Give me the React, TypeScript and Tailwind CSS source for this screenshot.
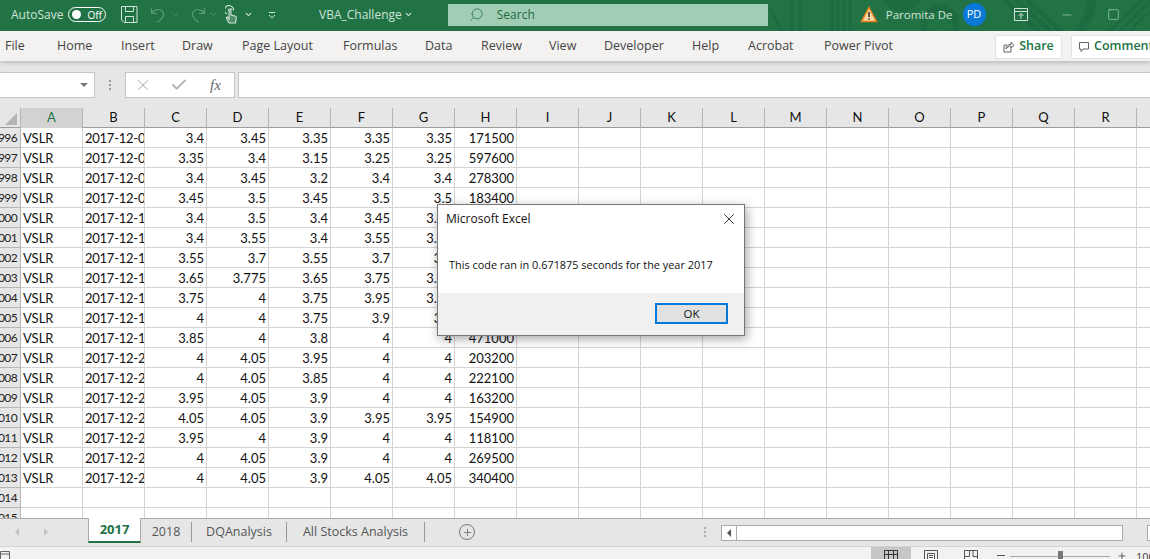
import React from 'react';
import { ChevronDown, X, Check, Search, Minus, Square, Plus } from 'lucide-react';

const tabs = [
  { label: 'File', cls: 'w-[57px] pl-[5px]' },
  { label: 'Home', cls: 'w-[64px]' },
  { label: 'Insert', cls: 'w-[61px]' },
  { label: 'Draw', cls: 'w-[60px]' },
  { label: 'Page Layout', cls: 'w-[101px]' },
  { label: 'Formulas', cls: 'w-[82px]' },
  { label: 'Data', cls: 'w-[56px]' },
  { label: 'Review', cls: 'w-[68px]' },
  { label: 'View', cls: 'w-[55px]' },
  { label: 'Developer', cls: 'w-[88px]' },
  { label: 'Help', cls: 'w-[56px]' },
  { label: 'Acrobat', cls: 'w-[76px]' },
  { label: 'Power Pivot', cls: 'w-[100px]' },
];

const columns = ['A', 'B', 'C', 'D', 'E', 'F', 'G', 'H', 'I', 'J', 'K', 'L', 'M', 'N', 'O', 'P', 'Q', 'R', ''];

const rows: [number, string, string, string, string, string, string, string][] = [
  [3996, '2017-12-0', '3.4', '3.45', '3.35', '3.35', '3.35', '171500'],
  [3997, '2017-12-0', '3.35', '3.4', '3.15', '3.25', '3.25', '597600'],
  [3998, '2017-12-0', '3.4', '3.45', '3.2', '3.4', '3.4', '278300'],
  [3999, '2017-12-0', '3.45', '3.5', '3.45', '3.5', '3.5', '183400'],
  [4000, '2017-12-1', '3.4', '3.5', '3.4', '3.45', '3.45', ''],
  [4001, '2017-12-1', '3.4', '3.55', '3.4', '3.55', '3.55', ''],
  [4002, '2017-12-1', '3.55', '3.7', '3.55', '3.7', '3.7', ''],
  [4003, '2017-12-1', '3.65', '3.775', '3.65', '3.75', '3.75', ''],
  [4004, '2017-12-1', '3.75', '4', '3.75', '3.95', '3.95', ''],
  [4005, '2017-12-1', '4', '4', '3.75', '3.9', '3.9', ''],
  [4006, '2017-12-1', '3.85', '4', '3.8', '4', '4', '471000'],
  [4007, '2017-12-2', '4', '4.05', '3.95', '4', '4', '203200'],
  [4008, '2017-12-2', '4', '4.05', '3.85', '4', '4', '222100'],
  [4009, '2017-12-2', '3.95', '4.05', '3.9', '4', '4', '163200'],
  [4010, '2017-12-2', '4.05', '4.05', '3.9', '3.95', '3.95', '154900'],
  [4011, '2017-12-2', '3.95', '4', '3.9', '4', '4', '118100'],
  [4012, '2017-12-2', '4', '4.05', '3.9', '4', '4', '269500'],
  [4013, '2017-12-2', '4', '4.05', '3.9', '4.05', '4.05', '340400'],
];

const GRID = 'grid grid-cols-[21px_repeat(18,62px)_62px] h-5';
const CELL = 'border-r border-b border-[#d4d4d4] h-5 overflow-hidden whitespace-nowrap leading-[20px] px-[2px]';

function RowHead({ n }: { n: number }) {
  return (
    <div className="flex justify-end overflow-hidden h-5 pr-[3px] bg-[#e6e6e6] border-r border-b border-[#b5b5b5] text-[12px] tracking-[-0.6px] leading-[20px] text-[#222]">
      <span className="shrink-0">{n}</span>
    </div>
  );
}

function Row({ row }: { row: (typeof rows)[number] }) {
  const [n, date, ...nums] = row;
  return (
    <div className={GRID}>
      <RowHead n={n} />
      <div className={CELL}>VSLR</div>
      <div className={`${CELL} tracking-[-0.25px]`}>{date}</div>
      {nums.map((v, i) => (
        <div key={i} className={`${CELL} text-right`}>{v}</div>
      ))}
      {columns.slice(8).map((c) => (
        <div key={c} className={CELL} />
      ))}
    </div>
  );
}

function EmptyRow({ n }: { n: number }) {
  return (
    <div className={GRID}>
      <RowHead n={n} />
      {columns.map((c) => (
        <div key={c} className={CELL} />
      ))}
    </div>
  );
}

export default function App() {
  return (
    <div className="relative w-[1150px] h-[559px] overflow-hidden flex flex-col bg-white font-['Open_Sans',sans-serif]">
      {/* Title bar */}
      <div className="relative h-[31px] shrink-0 bg-[#217346] flex items-center text-[#cfe3d8] overflow-hidden">
        <svg className="absolute left-[770px] top-0" width="380" height="31" viewBox="0 0 380 31" fill="none" stroke="#1e6b41">
          <path strokeWidth="3" d="M22 0v31M30 0v31M62 0v31M68 0v31M74 0v31" />
          <path strokeWidth="3" d="M-5 0L12 31M80 0v31" />
          <path strokeWidth="12" d="M118 -3a16 16 0 0 0 28 0" />
          <circle cx="170" cy="24" r="16" strokeWidth="7" />
          <path strokeWidth="5" d="M235 0l34 31M246 0l34 31M257 0l34 31" />
          <path strokeWidth="9" d="M322 -4c2 14 -6 26 -14 36" />
          <path strokeWidth="3" d="M350 31l30 -30M360 31l20 -20M340 31l40 -40" />
        </svg>
        <div className="relative flex items-center h-full w-full pb-[2px]">
          <span className="ml-[11px] w-[57px] shrink-0 text-[12px]">AutoSave</span>
          <div className="w-[38px] h-[15px] shrink-0 rounded-full border border-white flex items-center px-[3px] justify-between">
            <span className="w-[9px] h-[9px] rounded-full bg-white" />
            <span className="text-[10px] leading-none text-white">Off</span>
          </div>
          <svg className="ml-[15px] shrink-0" width="17" height="17" viewBox="0 0 17 17" fill="none" stroke="#cfe3d8">
            <path d="M.5 .5h15.500v16H3l-2.500-2.500z M4.500 .5v5h8v-5 M4.500 16.500v-6h8v6" />
          </svg>
          <svg className="ml-[12px] shrink-0" width="16" height="17" viewBox="0 0 16 17" fill="none" stroke="#5d9a78" strokeWidth="1.2">
            <path d="M1.500 2v5.500h5.500 M1.500 7.500C4 3 10.500 2 13 6c2 3.500 -1 7 -6 10.500" />
          </svg>
          <ChevronDown className="ml-[5px] shrink-0 text-[#5d9a78]" size={9} />
          <svg className="ml-[10px] shrink-0" width="16" height="17" viewBox="0 0 16 17" fill="none" stroke="#5d9a78" strokeWidth="1.2">
            <path d="M14.500 2v5.500H9 M14.500 7.500C12 3 5.500 2 3 6c-2 3.500 1 7 6 10.500" />
          </svg>
          <ChevronDown className="ml-[3px] shrink-0 text-[#5d9a78]" size={9} />
          <svg className="ml-[7px] shrink-0" width="13" height="19" viewBox="0 0 13 19" fill="none" stroke="#cfe3d8" strokeWidth="1.100">
            <path d="M1.800 9A4.500 4.500 0 1 1 8.500 5.500 M3 5.500a2.200 2.200 0 0 1 4 -.5" />
            <path d="M4 18l-2.500 -4.500c-.6 -1.200 1 -2 1.700 -.8l.8 1.300V6.500c0-1.300 2-1.300 2 0V10l4 1c1 .3 1.500 1 1.300 2l-.8 5z" fill="#cfe3d8" fillOpacity="0.25" />
          </svg>
          <ChevronDown className="ml-[6px] shrink-0" size={9} strokeWidth={3} />
          <svg className="ml-[15px] shrink-0" width="8" height="8" viewBox="0 0 8 8" fill="none" stroke="#cfe3d8">
            <path d="M1 1.500h6M1 4l3 3 3-3" />
          </svg>
          <span className="ml-[43px] shrink-0 text-[12px]">VBA_Challenge</span>
          <ChevronDown className="ml-[2px] shrink-0" size={9} strokeWidth={3} />
          <div className="ml-[35px] w-[320px] h-[22px] shrink-0 bg-[#a0cdb3] flex items-center text-[#1f6b42]">
            <Search className="ml-[21px] -scale-x-100" size={15} strokeWidth={1.2} />
            <span className="ml-[13px] text-[12px]">Search</span>
          </div>
          <svg className="ml-[92px] shrink-0" width="18" height="17" viewBox="0 0 18 17">
            <path d="M9 1.500L16.500 15.500H1.500z" fill="#f7d9a8" stroke="#e8801a" strokeWidth="1.500" />
            <path d="M9 6v5M9 12.200v1.600" stroke="#3a2a10" strokeWidth="1.500" />
          </svg>
          <span className="ml-[8px] shrink-0 text-[11.5px]">Paromita De</span>
          <div className="ml-[10px] w-[23px] h-[23px] shrink-0 rounded-full bg-[#0a78d7] text-white text-[11px] flex items-center justify-center">PD</div>
          <svg className="ml-[28px] shrink-0" width="14" height="13" viewBox="0 0 14 13" fill="none" stroke="#cfe3d8">
            <path d="M.5 .5h13v12H.5z M.5 3.500h13 M7 11V5.500M4.500 8L7 5.500 9.500 8" />
          </svg>
          <Minus className="ml-[32px] shrink-0" size={14} strokeWidth={1} />
          <Square className="ml-[33px] shrink-0" size={13} strokeWidth={1} />
        </div>
      </div>

      {/* Ribbon tabs */}
      <div className="relative z-10 h-[30px] shrink-0 bg-[#f3f2f1] flex items-center pt-[1px] text-[12.5px] text-[#444] shadow-[0_2px_4px_rgba(0,0,0,0.18)]">
        {tabs.map((t) => (
          <span key={t.label} className={`${t.cls} shrink-0 whitespace-nowrap`}>{t.label}</span>
        ))}
        <div className="ml-[71px] flex gap-[9px] shrink-0">
          <div className="w-[67px] h-[24px] shrink-0 bg-white border border-[#e3e3e3] rounded-[2px] flex items-center justify-center gap-[4px] text-[#217346] font-semibold text-[12.5px]">
            <svg width="12" height="13" viewBox="0 0 12 13" fill="none" stroke="#666">
              <path d="M8 7.500v4.500H1V5h3 M3 9c0-3 2-4.500 5-4.500V2l3 3.500L8 8V6C6 6 4 7 3 9z" />
            </svg>
            Share
          </div>
          <div className="w-[100px] h-[24px] shrink-0 bg-white border border-[#e3e3e3] rounded-[2px] flex items-center pl-[6px] gap-[4px] text-[#217346] font-semibold text-[12.5px]">
            <svg width="12" height="12" viewBox="0 0 12 12" fill="none" stroke="#666">
              <path d="M1.500 1.500h9v6.500H5L3 10.500V8H1.500z" />
            </svg>
            Comments
          </div>
        </div>
      </div>

      {/* Formula bar */}
      <div className="h-[47px] shrink-0 bg-[#e6e6e6] flex items-start pt-[11px]">
        <div className="w-[95px] h-[26px] bg-white border border-[#c6c6c6] border-l-0 flex items-center justify-end pr-[6px]">
          <span className="w-0 h-0 border-x-[4px] border-x-transparent border-t-[4px] border-t-[#777]" />
        </div>
        <div className="w-[30px] h-[26px] flex flex-col items-center justify-center gap-[2px]">
          <span className="w-[2px] h-[2px] bg-[#999]" />
          <span className="w-[2px] h-[2px] bg-[#999]" />
          <span className="w-[2px] h-[2px] bg-[#999]" />
        </div>
        <div className="w-[110px] h-[26px] bg-white border border-[#c6c6c6] flex items-center text-[#b5b5b5]">
          <X className="ml-[8px]" size={18} strokeWidth={1.4} />
          <Check className="ml-[18px]" size={18} strokeWidth={2.5} />
          <span className="ml-[22px] text-[#666] text-[15px] italic font-['Liberation_Serif',serif]">fx</span>
        </div>
        <div className="ml-[3px] flex-1 h-[26px] bg-white border border-[#c6c6c6] border-r-0" />
      </div>

      {/* Sheet */}
      <div className="flex-1 min-h-0 overflow-hidden font-['Lato',sans-serif] text-[13px] text-[#111]">
        <div className="grid grid-cols-[21px_repeat(18,62px)_62px] h-5 bg-[#e6e6e6] border-b border-[#9c9c9c]">
          <div className="relative border-r border-[#b5b5b5]">
            <span className="absolute right-[3px] bottom-[3px] w-0 h-0 border-l-[12px] border-l-transparent border-b-[12px] border-b-[#b4b4b4]" />
          </div>
          {columns.map((c) => (
            <div
              key={c}
              className={`border-r border-[#b5b5b5] flex items-center justify-center ${c === 'A' ? 'bg-[#d2d2d2] text-[#217346]' : ''}`}
            >
              {c}
            </div>
          ))}
        </div>
        {rows.map((r) => (
          <Row key={r[0]} row={r} />
        ))}
        <EmptyRow n={4014} />
        <EmptyRow n={4015} />
      </div>

      {/* Sheet tabs */}
      <div className="h-[28px] shrink-0 bg-[#e6e6e6] border-t border-[#ababab] flex items-start text-[12.5px] text-[#555]">
        <div className="w-[88px] shrink-0 h-[25px] flex items-center">
          <span className="ml-[15px] w-0 h-0 border-y-[4px] border-y-transparent border-r-[4px] border-r-[#c4c4c4]" />
          <span className="ml-[25px] w-0 h-0 border-y-[4px] border-y-transparent border-l-[4px] border-l-[#c4c4c4]" />
        </div>
        <div className="w-[53px] shrink-0 h-[25px] bg-white border-x border-[#ababab] border-b-[2px] border-b-[#217346] -mt-px pt-px flex items-center justify-center font-bold text-[#217346] text-[13px]">2017</div>
        <div className="w-[51px] shrink-0 h-[20px] mt-[3px] border-r border-[#999] flex items-center justify-center">2018</div>
        <div className="w-[95px] shrink-0 h-[20px] mt-[3px] border-r border-[#999] flex items-center justify-center">DQAnalysis</div>
        <div className="w-[138px] shrink-0 h-[20px] mt-[3px] border-r border-[#999] flex items-center justify-center">All Stocks Analysis</div>
        <div className="ml-[34px] mt-[5px] w-[16px] h-[16px] shrink-0 rounded-full border-[1.5px] border-[#777] flex items-center justify-center">
          <Plus size={11} strokeWidth={2} className="text-[#777]" />
        </div>
        <div className="ml-[229px] mt-[8px] w-[2px] h-[10px] shrink-0 border-y-2 border-[#aaa] flex items-center">
          <span className="w-[2px] h-[2px] bg-[#aaa]" />
        </div>
        <div className="ml-[15px] mt-[6px] w-[402px] h-[16px] shrink-0 bg-white border border-[#ababab] flex items-center">
          <div className="w-[15px] h-full border-r border-[#ababab] flex items-center justify-center">
            <span className="w-0 h-0 border-y-[4px] border-y-transparent border-r-[4px] border-r-[#555]" />
          </div>
        </div>
        <div className="ml-[24px] mt-[6px] w-[10px] h-[16px] shrink-0 bg-white border border-[#ababab]" />
      </div>

      {/* Status bar */}
      <div className="h-[13px] shrink-0 bg-[#f3f2f1] border-t border-[#d4d4d4] flex items-start overflow-hidden text-[#444]">
        <svg className="mt-[4px] shrink-0" width="10" height="9" viewBox="0 0 10 9" fill="none" stroke="#666">
          <path d="M.5 .5h9v8h-9z M.5 3h9" />
        </svg>
        <div className="ml-[861px] w-[40px] h-[13px] shrink-0 bg-[#c6c6c6] flex justify-center pt-[3px]">
          <svg width="14" height="10" viewBox="0 0 14 10" fill="none" stroke="#333">
            <path d="M.5 .5h13v9H.5z M.5 4.500h13 M4.500 .5v9 M9.500 .5v9" />
          </svg>
        </div>
        <svg className="ml-[13px] mt-[3px] shrink-0" width="14" height="10" viewBox="0 0 14 10" fill="none" stroke="#555">
          <path d="M.5 .5h13v9H.5z M3.500 3.500h7v6h-7z M5 5.500h4M5 7.500h4" />
        </svg>
        <svg className="ml-[26px] mt-[3px] shrink-0" width="14" height="10" viewBox="0 0 14 10" fill="none" stroke="#555">
          <path d="M.5 9.500V.5h13v9 M5.500 .5v6h-5 M9 .5v6h4.500" />
        </svg>
        <span className="ml-[19px] mt-[8px] w-[8px] h-px shrink-0 bg-[#555]" />
        <div className="relative ml-[5px] mt-[9px] w-[100px] h-px shrink-0 bg-[#aaa]">
          <span className="absolute left-[48px] -top-[5px] w-[5px] h-[9px] bg-[#777]" />
        </div>
        <Plus className="ml-[7px] mt-[4px] shrink-0" size={10} />
        <span className="ml-[9px] mt-[3px] text-[11px] leading-[14px] whitespace-nowrap shrink-0">100%</span>
      </div>

      {/* Message box */}
      <div className="absolute left-[437px] top-[204px] w-[308px] h-[132px] bg-white border border-[#777] shadow-[2px_3px_10px_rgba(0,0,0,0.35)] flex flex-col text-[#111]">
        <div className="h-[28px] flex items-center justify-between pl-[8px] pr-[6px] text-[12px]">
          <span>Microsoft Excel</span>
          <X size={18} strokeWidth={1.1} />
        </div>
        <div className="flex-1 pl-[11px] pt-[24px] text-[10.9px] whitespace-nowrap">
          This code ran in 0.671875 seconds for the year 2017
        </div>
        <div className="h-[42px] bg-[#f0f0f0] flex items-start justify-end pt-[10px] pr-[16px]">
          <div className="w-[73px] h-[21px] bg-[#e1e1e1] border-2 border-[#0078d7] flex items-center justify-center text-[11.5px]">OK</div>
        </div>
      </div>
    </div>
  );
}
